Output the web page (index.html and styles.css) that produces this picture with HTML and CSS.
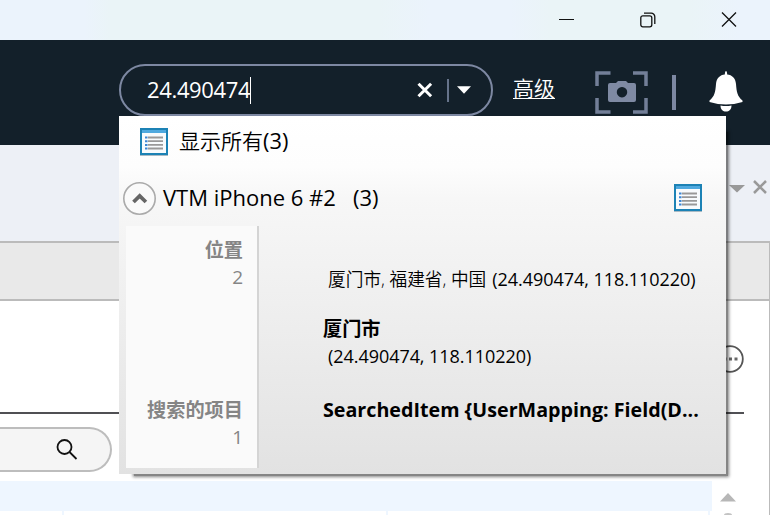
FILE: index.html
```
<!DOCTYPE html>
<html lang="zh-CN">
<head>
<meta charset="utf-8">
<title>搜索</title>
<link rel="stylesheet" href="styles.css">
</head>
<body>
<div class="titlebar">
  <svg class="win-min" width="16" height="16" viewBox="0 0 16 16"><path d="M0 7.5h15" stroke="#111"/></svg>
  <svg class="win-restore" width="16" height="16" viewBox="0 0 16 16" fill="none" stroke="#111" stroke-width="1.3"><rect x=".8" y="3.800" width="11" height="11" rx="2"/><path d="M4 1.200h7.200a3.600 3.600 0 0 1 3.600 3.600V12"/></svg>
  <svg class="win-close" width="16" height="16" viewBox="0 0 16 16"><path d="M1 .5l14 14M15 .5L1 14.500" stroke="#111" stroke-width="1.3"/></svg>
</div>
<header class="header">
  <div class="search">
    <span class="query">24.490474</span><span class="caret"></span>
    <svg class="clear" width="16" height="16" viewBox="0 0 16 16"><path d="M1.5 1.7l12.6 12.6M14.1 1.7L1.5 14.3" stroke="#fff" stroke-width="3"/></svg>
    <span class="split"></span>
    <svg class="drop" width="14" height="8" viewBox="0 0 14 8"><path d="M0 .3h14L7 7.7z" fill="#fff"/></svg>
  </div>
  <a class="advanced">高级</a>
  <svg class="camera" width="54" height="44" viewBox="0 0 54 44"><path d="M2 16V3h13.500M38 3h13v13M51 28v14H38M15.500 42H2V28" fill="none" stroke="#737f98" stroke-width="3.500"/><path fill-rule="evenodd" d="M15 13h6l2-2h8l2 2h6q2 0 2 2v15q0 2-2 2H15q-2 0-2-2V15q0-2 2-2zM27 17a5.200 5.200 0 1 0 .01 0z" fill="#7f8aa3"/></svg>
  <span class="divider"></span>
  <svg class="bell" width="34" height="42" viewBox="0 0 34 42" fill="#fff"><path d="M17 0q1 0 1.200 3.500C23 4 26.500 7 27 13c.6 8 1.500 12.500 6.500 16.500v1.500Q25 33.500 17 33.500T.5 31v-1.500C5.500 25.500 6.400 21 7 13 7.500 7 11 4 15.800 3.500q.2-3.500 1.200-3.500z"/><path d="M11.500 34.500q5.500 1 11 0c0 4-2.500 6-5.500 6s-5.500-2-5.500-6z"/></svg>
</header>
<div class="tabs">
  <svg width="16" height="8" viewBox="0 0 16 8"><path d="M0 0h16L8 7.500z" fill="#999"/></svg>
  <svg class="tab-close" width="14" height="14" viewBox="0 0 14 14"><path d="M1 1l12 12M13 1L1 13" stroke="#999" stroke-width="2.500"/></svg>
</div>
<div class="toolstrip"></div>
<main class="content">
  <div class="more-row"><svg width="28" height="28" viewBox="0 0 28 28"><circle cx="14" cy="14" r="12.800" fill="none" stroke="#555" stroke-width="1.800"/><path d="M7.500 12.500h3v3h-3zM13 12.500h3v3h-3zM18.500 12.500h3v3h-3z" fill="#666"/></svg></div>
  <div class="filter"><svg width="22" height="22" viewBox="0 0 22 22" fill="none" stroke="#111" stroke-width="1.800"><circle cx="8.500" cy="8" r="7"/><path d="M13.500 13l7 7"/></svg></div>
  <div class="table">
    <div class="table-grid"><div class="thead"></div><div class="cells"><i></i><i></i><i></i></div></div>
    <div class="scroll"><svg width="16" height="22" viewBox="0 0 16 22"><path d="M0 8.500L8 0l8 8.500z" fill="#b7b7b7"/><path d="M4 22q0-2 4-2t4 2z" fill="#c3c3c3"/></svg></div>
  </div>
</main>

<section class="popup">
  <div class="show-all">
    <svg class="list" width="28" height="28" viewBox="0 0 28 28"><path d="M0 0h28v27H0z" fill="#1c82b5"/><path d="M2 2h24v3H2z" fill="#4fa9df"/><path d="M2 5h24v20H2z" fill="#f8fbfd"/><path d="M5 9.500h2.500M5 13.200h2.500M5 16.900h2.500M5 20.500h2.500" stroke="#3c86d4" stroke-width="2"/><path d="M8 9.500h15M8 13.200h15M8 16.900h15M8 20.500h15" stroke="#999" stroke-width="1.800"/><path d="M0 27h28v1H0z" fill="#a9bac4"/></svg>
    <span class="show-label">显示所有<span class="latin">(3)</span></span>
  </div>
  <div class="group">
    <svg width="34" height="34" viewBox="0 0 34 34"><circle cx="16.500" cy="16.500" r="15.700" fill="#fafafa" stroke="#aaa" stroke-width="1.600"/><path d="M10.500 20l6.200-6 6.200 6" fill="none" stroke="#666" stroke-width="3.800"/></svg>
    <span class="group-name">VTM iPhone 6 #2</span><span class="group-count">(3)</span>
    <svg class="list list-right" width="28" height="28" viewBox="0 0 28 28"><path d="M0 0h28v27H0z" fill="#1c82b5"/><path d="M2 2h24v3H2z" fill="#4fa9df"/><path d="M2 5h24v20H2z" fill="#f8fbfd"/><path d="M5 9.500h2.500M5 13.200h2.500M5 16.900h2.500M5 20.500h2.500" stroke="#3c86d4" stroke-width="2"/><path d="M8 9.500h15M8 13.200h15M8 16.900h15M8 20.500h15" stroke="#999" stroke-width="1.800"/><path d="M0 27h28v1H0z" fill="#a9bac4"/></svg>
  </div>
  <div class="results">
    <div class="side">
      <div class="kind kind-place"><b>位置</b><span>2</span></div>
      <div class="kind kind-item"><b>搜索的项目</b><span>1</span></div>
    </div>
    <div class="hits">
      <div class="hit-place"><span class="cjk">厦门市, 福建省, 中国</span> <span class="coords">(24.490474, 118.110220)</span></div>
      <div class="hit-city">厦门市</div>
      <div class="hit-coords"><span class="coords">(24.490474, 118.110220)</span></div>
      <div class="hit-item">SearchedItem {UserMapping: Field(D...</div>
    </div>
  </div>
</section>
</body>
</html>
```
FILE: styles.css
```
* { box-sizing: border-box; }
body {
  margin: 0;
  width: 770px;
  height: 515px;
  overflow: hidden;
  position: relative;
  display: flex;
  flex-direction: column;
  font-family: "Open Sans", "Noto Sans CJK SC", sans-serif;
  color: #000;
  background: #fff;
}
svg { display: block; flex: none; }
span, b, a { white-space: nowrap; }

.titlebar {
  height: 40px;
  flex: none;
  display: flex;
  align-items: center;
  justify-content: flex-end;
  gap: 65px;
  padding-right: 33px;
  background: linear-gradient(90deg, #ebf3fc 0, #ebf3fc 85px, #eaf4f7 110px, #eaf4f7 380px, #ebf3fc 430px, #ebf3fc 510px, #eaf4f7 550px, #eaf4f7 690px, #ebf3fc 740px);
}
.header {
  height: 105px;
  flex: none;
  display: flex;
  align-items: flex-start;
  padding: 24px 0 0 119px;
  background: #13202a;
}
.search {
  width: 374px;
  height: 52px;
  border: 2px solid #7d88a2;
  border-radius: 26px;
  display: flex;
  align-items: center;
  padding-left: 26px;
  color: #fff;
}
.query { font-size: 22px; letter-spacing: -0.35px; width: 103px; margin-top: -2px; }
.caret { width: 1px; height: 27px; background: #fff; }
.clear { margin-left: 166px; }
.split { width: 2px; height: 23px; margin: 0 8px 0 14px; background: #66738a; }
.advanced {
  margin: 8px 0 0 20px;
  width: 42px;
  height: 26px;
  font: 350 21px/30px "Noto Sans CJK SC", sans-serif;
  color: #fff;
  text-decoration: underline;
  text-underline-offset: 2px;
  text-decoration-thickness: 1px;
}
.camera { margin: 6px 0 0 40px; }
.divider { width: 4px; height: 35px; margin: 11px 0 0 23px; background: #7d88a2; }
.bell { margin: 7px 0 0 33px; }

.tabs {
  height: 96px;
  flex: none;
  display: flex;
  justify-content: flex-end;
  padding: 40px 3px 0 0;
  gap: 8px;
  background: #edf0f6;
}
.tab-close { margin-top: -5px; }
.toolstrip {
  height: 60px;
  flex: none;
  background: #e9e9e9;
  border: 2px solid #bbb;
  border-width: 2px 1px 2px 0;
}
.content { flex: 1; border-right: 1px solid #bbb; }
.more-row {
  height: 113px;
  width: 744px;
  padding-top: 44px;
  border-bottom: 2px solid #505054;
  display: flex;
  justify-content: flex-end;
}
.filter {
  width: 112px;
  height: 45px;
  margin-top: 13px;
  border: 2px solid #bdbdbd;
  border-left: 0;
  border-radius: 0 23px 23px 0;
  background: #f5f5f5;
  padding: 10px 0 0 56px;
}
.table { display: flex; margin-top: 9px; height: 34px; }
.table-grid { width: 712px; }
.thead { height: 30px; background: #eef6ff; }
.cells { display: flex; height: 4px; width: 710px; }
.cells i { border-right: 2px solid #eef6ff; }
.cells i:nth-child(1) { width: 64px; }
.cells i:nth-child(2) { width: 324px; }
.cells i:nth-child(3) { flex: 1; }
.scroll { padding: 12px 0 0 8px; }

.popup {
  position: absolute;
  z-index: 1;
  left: 119px;
  top: 116px;
  width: 607px;
  height: 358px;
}
.popup::before {
  content: "";
  position: absolute;
  z-index: -2;
  inset: 16px -2px -2px 15px;
  background: rgba(0, 0, 0, 0.48);
  box-shadow: 0 0 3px 1px rgba(0, 0, 0, 0.48);
}
.popup::after {
  content: "";
  position: absolute;
  z-index: -1;
  inset: 0;
  background: linear-gradient(180deg, #fff 0, #fdfdfd 14%, #f7f7f7 23%, #e2e2e2 100%);
}
.show-all { height: 54px; padding: 12px 0 0 21px; display: flex; }
.show-label {
  margin: -2px 0 0 11px;
  height: 28px;
  font: 350 21px/30px "Open Sans", "Noto Sans CJK SC", sans-serif;
}
.latin { font-weight: 400; font-size: 21.800px; }
.group { height: 56px; padding: 12px 24px 0 4px; display: flex; }
.group-name { font-size: 22px; line-height: 30px; margin-left: 6px; width: 190px; }
.group-count { font-size: 22px; line-height: 30px; }
.list-right { margin: 2px 0 0 auto; }
.results { display: flex; padding-left: 7px; }
.side {
  width: 133px;
  height: 242px;
  background: #fafafa;
  border-right: 2px solid #d4d4d4;
  padding-right: 14px;
  color: #858585;
}
.kind { display: flex; flex-direction: column; align-items: flex-end; font-size: 19px; line-height: 28px; }
.kind b { font-family: "Noto Sans CJK SC", sans-serif; font-size: 19.200px; }
.kind-place { height: 160px; padding-top: 9px; }
.kind-item { padding-top: 9px; }
.kind span { font-weight: 400; }
.hits { padding: 39px 0 0 64px; font-size: 18px; line-height: 28px; }
.hit-place { padding-left: 5px; height: 49px; display: flex; gap: 6px; }
.cjk { font: 350 17.700px/28px "Open Sans", "Noto Sans CJK SC", sans-serif; }
.coords { letter-spacing: -0.05px; }
.hit-city { font: 700 19.200px/28px "Noto Sans CJK SC", sans-serif; }
.hit-coords { padding: 0 0 0 5px; height: 54px; }
.hit-item { font-size: 19.700px; font-weight: 700; white-space: nowrap; }
```
